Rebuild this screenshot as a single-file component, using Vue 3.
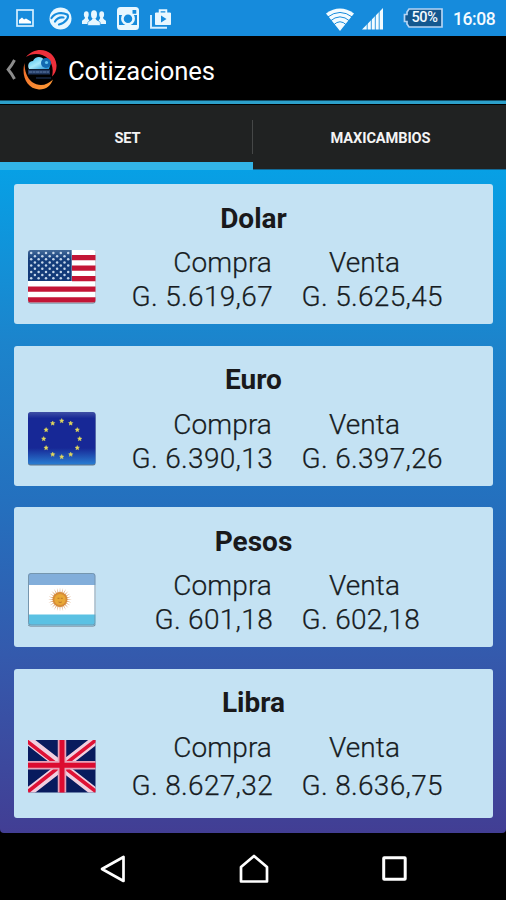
<script setup>
const rates = [
  { name: 'Dolar', flag: 'us', buy: 'G. 5.619,67', sell: 'G. 5.625,45' },
  { name: 'Euro', flag: 'eu', buy: 'G. 6.390,13', sell: 'G. 6.397,26' },
  { name: 'Pesos', flag: 'ar', buy: 'G. 601,18', sell: 'G. 602,18' },
  { name: 'Libra', flag: 'gb', buy: 'G. 8.627,32', sell: 'G. 8.636,75' },
]

const usStars = []
for (let r = 0; r < 9; r++) {
  const n = r % 2 ? 5 : 6
  for (let c = 0; c < n; c++) {
    usStars.push({ x: 3.2 + c * 7.4 + (r % 2 ? 3.7 : 0), y: 3 + r * 3.15 })
  }
}
const euStars = Array.from({ length: 12 }, (_, i) => ({
  x: 33.7 + 18 * Math.sin((i * Math.PI) / 6),
  y: 26.7 - 18 * Math.cos((i * Math.PI) / 6),
}))
const rays = Array.from({ length: 24 }, (_, i) => i * 15)
</script>

<template>
  <div class="screen">
    <header class="status">
      <div class="notices">
        <svg class="n1" width="18" height="18" viewBox="0 0 18 18">
          <rect x="1" y="1" width="16" height="16" fill="none" stroke="#d5efff" stroke-width="1.7" />
          <path d="M3 14.5V11l3-2.5 2 2 2-1 5 3v2z" fill="#fff" />
        </svg>
        <svg class="n2" width="23" height="23" viewBox="0 0 23 23">
          <circle cx="11.5" cy="11.5" r="11" fill="#e8f7ff" />
          <path d="M2.500 11C6 5.500 13 5 18 7.500c3 2-1 8.500-8 10M6 14.500c2-3.500 5-4.500 8.500-4" fill="none" stroke="#168bdc" stroke-width="2.200" stroke-linecap="round" />
        </svg>
        <svg class="n3" width="24" height="16" viewBox="0 0 24 16">
          <g fill="#e8f7ff">
            <ellipse cx="4.300" cy="4.500" rx="2.400" ry="3.300" />
            <ellipse cx="19.700" cy="4.500" rx="2.400" ry="3.300" />
            <path d="M0 14v-2.500C0 9.500 3 10 3 7h2.800c0 2.500 1.500 2.500 1.500 4v3zM24 14v-2.500c0-2-3-1.500-3-4.500h-2.800c0 2.500-1.500 2.500-1.500 4v3z" />
            <path d="M5.700 15.500v-2.700c0-2.300 4.600-1.800 4.600-4.800h3.400c0 3 4.600 2.500 4.600 4.800v2.700z" stroke="#168bdc" stroke-width=".6" />
            <ellipse cx="12" cy="4.500" rx="3" ry="4.200" />
          </g>
        </svg>
        <svg class="n4" width="22" height="23" viewBox="0 0 22 23">
          <rect x="1" y="1" width="20" height="21" rx="2.500" fill="none" stroke="#e8f7ff" stroke-width="2" />
          <path d="M1 2h20v6h-5.500a6.300 6.300 0 0 0-9 0H1z" fill="#e8f7ff" />
          <circle cx="11" cy="11.700" r="5.600" fill="none" stroke="#e8f7ff" stroke-width="2.700" />
          <rect x="15.500" y="3" width="3.800" height="3.800" rx=".6" fill="#168bdc" />
          <path d="M2 18h18v3H2z" fill="#e8f7ff" />
        </svg>
        <svg class="n5" width="22" height="20" viewBox="0 0 22 20">
          <path d="M1 6V18.800H17" fill="none" stroke="#d5efff" stroke-width="1.900" />
          <path d="M5.500 4H20.500v11.500H5.500z" fill="#e8f7ff" stroke="#e8f7ff" stroke-linejoin="round" />
          <path d="M9.700 4V1.200h6.600V4" fill="none" stroke="#e8f7ff" stroke-width="1.900" />
          <path d="M11 6.500l5.500 3.500-5.500 3.500z" fill="#168bdc" />
        </svg>
      </div>
      <div class="system">
        <svg class="wifi" width="28" height="23" viewBox="0 0 28 23">
          <path d="M0 5.500Q14-4.500 28 5.500L14 23z" fill="#f2fbff" />
          <path d="M1.500 9.200Q14-.3 26.500 9.200M4 13.200Q14 4.500 24 13.200M7.500 17Q14 10.500 20.500 17" fill="none" stroke="#168bdc" stroke-width="1" />
        </svg>
        <svg class="signal" width="21" height="22" viewBox="0 0 21 22">
          <path d="M0 21.500L21 0v21.500z" fill="#f2fbff" />
          <path d="M5.200 13v9M9.300 9v13M13.300 5v17M17.200 1v21" stroke="#168bdc" stroke-width=".9" />
        </svg>
        <div class="battery">
          <svg width="40" height="20" viewBox="0 0 40 20">
            <path d="M6 1H39V19H6L4 16V13.500H1.500V6.500H4V4z" fill="#14588f" stroke="#b5d4f3" stroke-width="1.700" />
          </svg>
          <span>50%</span>
        </div>
        <time>16:08</time>
      </div>
    </header>

    <div class="appbar">
      <svg class="back" width="10" height="21" viewBox="0 0 10 21">
        <path d="M8.500 1Q6 6 2.200 10.500Q6 15 8.500 20" fill="none" stroke="#8c8c8c" stroke-width="2.900" />
      </svg>
      <svg class="logo" width="36" height="42" viewBox="0 0 36 42">
        <defs>
          <linearGradient id="cloud" x1="0" y1="0" x2="1" y2="1">
            <stop offset="0" stop-color="#39b9ee" /><stop offset=".5" stop-color="#a8e8fa" /><stop offset="1" stop-color="#178bd2" />
          </linearGradient>
          <linearGradient id="orange" x1="0" y1="0" x2="1" y2="1">
            <stop offset="0" stop-color="#ee692b" /><stop offset="1" stop-color="#ff9c35" />
          </linearGradient>
        </defs>
        <path d="M4 8C14-4 33 0 34.500 16c.3 5-1.500 9-4.500 11.500C33 15 26 5 14 5 10 5 7 6 4 8z" fill="#ee303b" />
        <path d="M2.500 14C-1 27 5 40 17 40.500c7 .2 12-4 14-10-6 6-14 7.500-21 2.500C5 29 2.500 22 2.500 14z" fill="url(#orange)" />
        <path d="M7 20c-2-4 0-8 4-8 2-5 9-5 11-1 5-2 8 2 5 9z" fill="url(#cloud)" />
        <circle cx="24" cy="14" r="5" fill="#1269b0" />
        <circle cx="24.500" cy="13.500" r="1.600" fill="#61c5ef" />
        <path d="M6 20.500h22v5H6z" fill="#20375f" />
        <path d="M7 23h20" stroke="#4f6b96" stroke-width="1.700" stroke-dasharray="3 .5" />
        <path d="M14 29h15" stroke="#172743" stroke-width="1.500" />
      </svg>
      <h1>Cotizaciones</h1>
    </div>

    <nav class="tabs">
      <div class="tab active">SET</div>
      <div class="tab">MAXICAMBIOS</div>
    </nav>

    <main class="content">
      <section v-for="rate in rates" :key="rate.name" class="card" :class="rate.flag">
        <h2>{{ rate.name }}</h2>
        <div class="body">
          <svg class="flag" width="68" height="54" viewBox="0 0 68 54">
            <defs>
              <clipPath :id="'clip-' + rate.flag"><rect width="67.500" height="52.500" :rx="rate.flag === 'gb' ? 0 : 2.500" /></clipPath>
              <linearGradient id="blue" x1="0" y1="0" x2="0" y2="1">
                <stop offset="0" stop-color="#4050a6" /><stop offset=".12" stop-color="#172896" /><stop offset=".68" stop-color="#172896" /><stop offset="1" stop-color="#2a80d4" />
              </linearGradient>
              <linearGradient id="canton" x1="0" y1="0" x2="0" y2="1">
                <stop offset="0" stop-color="#436a99" /><stop offset=".3" stop-color="#153e7b" /><stop offset="1" stop-color="#123978" />
              </linearGradient>
            </defs>
            <rect v-if="rate.flag !== 'gb'" y="1" width="67.500" height="52.500" rx="2.500" fill="#657788" />
            <g :clip-path="'url(#clip-' + rate.flag + ')'">
              <template v-if="rate.flag === 'us'">
                <rect width="68" height="53" fill="#fff" />
                <path d="M44 7.700h24M44 18.200h24M44 28.700h24M0 39.200h68M0 50h68" stroke="#c31536" stroke-width="5.300" />
                <rect width="43.700" height="31" fill="url(#canton)" />
                <circle v-for="(s, i) in usStars" :key="i" :cx="s.x" :cy="s.y" r="1.250" fill="#c5d6e9" />
              </template>
              <template v-else-if="rate.flag === 'eu'">
                <rect width="68" height="53" fill="url(#blue)" />
                <path v-for="(s, i) in euStars" :key="i" :transform="`translate(${s.x} ${s.y}) scale(.85)`" d="M0-2.500L.8-.8 2.500-.6 1.200.7 1.600 2.400 0 1.500-1.600 2.400-1.200.7-2.500-.6-.8-.8z" fill="#e3da62" stroke="#d9d056" stroke-width=".6" />
              </template>
              <template v-else-if="rate.flag === 'ar'">
                <rect width="68" height="53" fill="#fff" />
                <rect width="68" height="12" fill="#82aeda" />
                <rect y="41.500" width="68" height="12" fill="#5bc1e3" />
                <g transform="translate(32 26.500)">
                  <path v-for="r in rays" :key="r" :transform="`rotate(${r})`" d="M-1 0L0-12 1 0z" fill="#d3935f" />
                  <circle r="7.500" fill="#d68b38" /><circle r="5.600" fill="#e9a836" />
                  <path d="M-2.500-1.200h2M.8-1.200h2M-1.500 2.500Q0 3.500 1.800 2.500" stroke="#bb7828" fill="none" />
                </g>
                <rect x=".5" y=".5" width="66.500" height="51.500" rx="2.500" fill="none" stroke="#7596ae" />
              </template>
              <template v-else>
                <rect width="68" height="53" fill="#081b5e" />
                <path d="M0 0L67.500 52.500M67.500 0L0 52.500" stroke="#f0cfdf" stroke-width="9" />
                <path d="M-1 1.200L31 26M68 0L36 25M36 27L68 51.500M0 51.500L31 27" stroke="#df1135" stroke-width="3.600" />
                <path d="M34 0v53M0 25.200h68" stroke="#e8a3b8" stroke-width="8.500" />
                <path d="M34 0v53M0 25.200h68" stroke="#dc0b30" stroke-width="5" />
              </template>
            </g>
          </svg>
          <div class="buy"><span>Compra</span><span class="amount">{{ rate.buy }}</span></div>
          <div class="sell"><span class="label">Venta</span><span class="amount">{{ rate.sell }}</span></div>
        </div>
      </section>
    </main>

    <footer class="navigation">
      <svg width="26" height="28" viewBox="0 0 26 28"><path d="M23.500 2v24L2 14z" fill="none" stroke="#fff" stroke-width="2.700" stroke-linejoin="round" /></svg>
      <svg width="30" height="30" viewBox="0 0 30 30"><path d="M2 13L15 2l13 11v14.500H2z" fill="none" stroke="#fff" stroke-width="2.700" stroke-linejoin="round" /></svg>
      <svg width="25" height="25" viewBox="0 0 25 25"><rect x="1.700" y="1.700" width="21.500" height="21.500" rx=".5" fill="none" stroke="#fff" stroke-width="3" /></svg>
    </footer>
  </div>
</template>

<style>
body { margin: 0; background: #000; }
</style>

<style scoped>
.screen { width: 506px; height: 900px; overflow: hidden; display: flex; flex-direction: column; background: #000; font-family: Roboto, "Noto Sans", sans-serif; }
svg { display: block; flex-shrink: 0; }
.status { height: 36px; flex-shrink: 0; background: #168bdc; display: flex; justify-content: space-between; box-sizing: border-box; }
.notices, .system { display: flex; align-items: center; }
.notices { padding-left: 16px; }
.n2 { margin-left: 15px; }
.n3 { margin-left: 10px; }
.n4 { margin-left: 11px; }
.n5 { margin-left: 11px; margin-top: 2px; }
.system { padding-right: 10px; color: #f4fbff; }
.wifi { margin-top: 2px; }
.signal { margin: 2px 0 0 8px; }
.battery { display: grid; width: 40px; margin-left: 20px; }
.battery > * { grid-area: 1 / 1; }
.battery span { align-self: center; text-align: center; padding-left: 3px; font-size: 14.500px; line-height: 20px; font-weight: 500; letter-spacing: -.4px; }
time { width: 43px; margin: 2px 0 0 10px; font-size: 17.500px; line-height: 22px; font-weight: 500; letter-spacing: -.4px; white-space: nowrap; }
.appbar { height: 68px; flex-shrink: 0; box-sizing: border-box; border-bottom: 3px solid #2ca0ca; box-shadow: inset 0 -1px #135069; display: flex; align-items: center; padding-left: 6px; }
.back { margin-top: 1px; }
.logo { margin-left: 6px; margin-top: 3px; }
h1 { margin: 4px 0 0 10px; color: #fff; font-size: 25.600px; line-height: 34px; font-weight: 400; letter-spacing: -.05px; }
.tabs { height: 66px; flex-shrink: 0; display: flex; background: #202222; border-top: 1px solid #000; box-sizing: border-box; }
.tab { flex: 1; box-sizing: border-box; border-bottom: 1px solid #126b98; color: #f4f4f4; font-size: 14.600px; line-height: 66px; text-align: center; font-weight: 700; letter-spacing: -.1px; padding-left: 2px; }
.tab.active { height: 65px; border-bottom: 8px solid #32b4e7; background: linear-gradient(#454747, #454747) right 15px / 1px 34px no-repeat; }
.content { height: 663px; flex-shrink: 0; box-sizing: border-box; padding: 14px 13px 0 14px; display: flex; flex-direction: column; gap: 21.500px; background: linear-gradient(#07a0e5, #1c84cc 26%, #2470be 50%, #345aad 73%, #423e94); border-radius: 0 0 4px 4px; }
.card { height: 140px; flex-shrink: 0; box-sizing: border-box; padding-top: 17.500px; background: #c4e2f3; border-radius: 3px; }
.card.gb { height: 149.500px; }
h2 { margin: 0; font-size: 28px; line-height: 34px; font-weight: 700; text-align: center; color: #19191b; }
.body { margin-top: 10.500px; padding-left: 14px; display: grid; grid-template-columns: 68px 176px 1fr; align-items: start; }
.flag { margin-top: 4px; }
.buy, .sell { display: flex; flex-direction: column; font-size: 28px; line-height: 34px; font-weight: 300; color: #171c22; letter-spacing: .1px; white-space: nowrap; -webkit-text-stroke: .25px #171c22; }
.amount { letter-spacing: .32px; }
.buy { align-items: flex-end; }
.buy .amount { margin-right: -1px; }
.sell { align-items: flex-start; padding-left: 30px; }
.sell .amount { margin-left: -.5px; }
.label { margin-left: 27px; }
.gb .flag { margin-top: 9px; }
.gb .amount { margin-top: 4.500px; }
.navigation { height: 67px; flex-shrink: 0; display: flex; align-items: center; padding: 4px 99px 0 100px; box-sizing: border-box; justify-content: space-between; }
</style>
